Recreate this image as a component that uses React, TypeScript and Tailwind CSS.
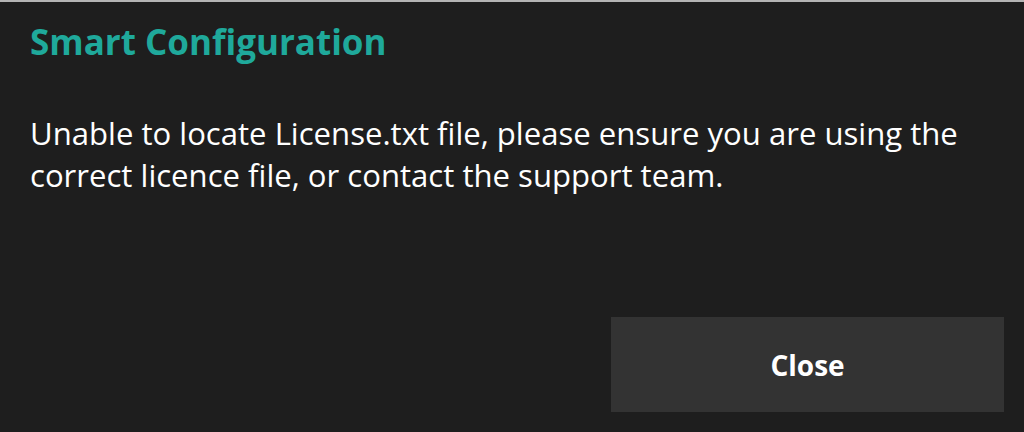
export default function App() {
  return (
    <div className="w-[1024px] h-[432px] bg-[#1e1e1e] border-t-[2px] border-[#b4b4b4] flex flex-col font-['Open_Sans',sans-serif] overflow-hidden">
      <div className="px-[30px] pt-[18px]">
        <h1 className="text-[35px] leading-[44px] font-bold text-[#1fa99b]">Smart Configuration</h1>
        <p className="mt-[48px] text-[31.1px] leading-[42px] text-white max-w-[950px]">
          Unable to locate License.txt file, please ensure you are using the correct licence file, or contact the support team.
        </p>
      </div>
      <div className="mt-auto flex justify-end pr-[20px] pb-[20px]">
        <button className="w-[393px] h-[95px] bg-[#333333] text-white text-[28px] font-bold">Close</button>
      </div>
    </div>
  );
}
